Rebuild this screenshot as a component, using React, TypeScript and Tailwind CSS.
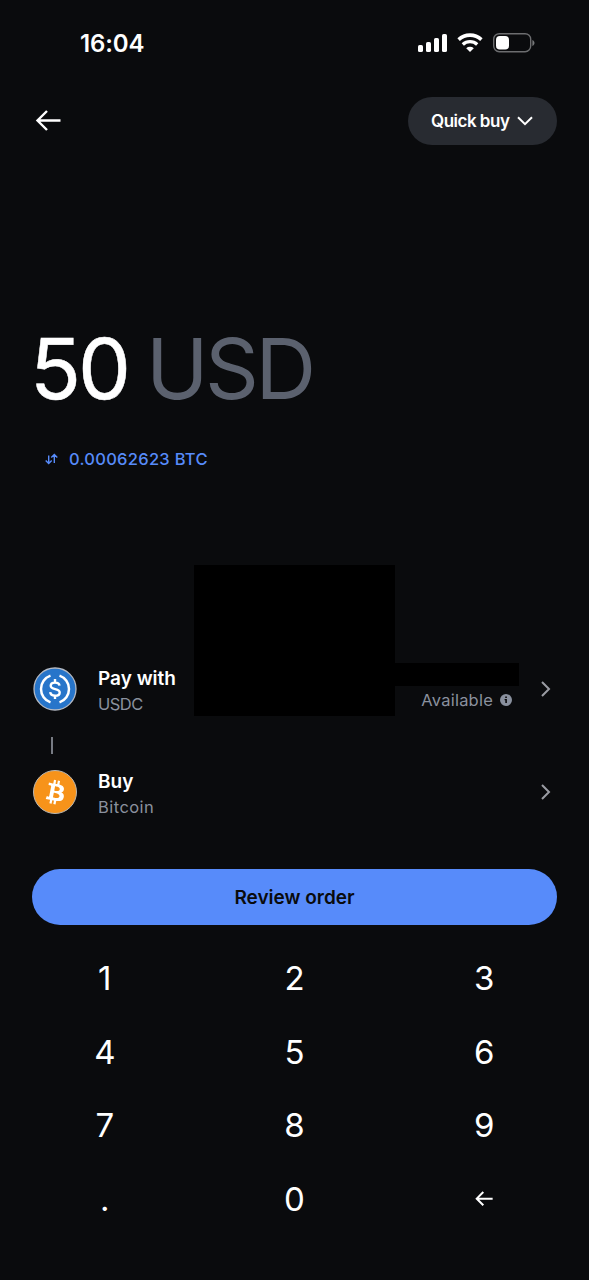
import type { ReactNode } from "react";
import { SiBitcoin } from "react-icons/si";

function StatusBar() {
  return (
    <div className="flex h-[87px] items-center justify-between pl-[80px] pr-[54px]">
      <span className="text-[24px] font-semibold leading-none tracking-[-0.1px]">16:04</span>
      <svg className="mb-[3px]" width="118" height="22" viewBox="0 0 118 22" fill="none">
        <rect x="1" y="14" width="5" height="7" rx="1.6" fill="#fff" />
        <rect x="9" y="11" width="5" height="10" rx="1.6" fill="#fff" />
        <rect x="17" y="7" width="5" height="14" rx="1.6" fill="#fff" />
        <rect x="25" y="3" width="5" height="18" rx="1.6" fill="#fff" />
        <path d="M41.6 8.600a16.800 16.800 0 0 1 22.800 0" stroke="#fff" strokeWidth="3.6" />
        <path d="M45.800 13.400a10.800 10.800 0 0 1 14.400 0" stroke="#fff" strokeWidth="3.4" />
        <path d="M49.2 17.2a5.6 5.6 0 0 1 7.6 0L53 21Z" fill="#fff" />
        <rect x="76.7" y="2.7" width="37" height="18" rx="5.6" stroke="#6c6d6f" strokeWidth="1.4" />
        <rect x="79" y="5" width="13" height="13.5" rx="3.8" fill="#fff" />
        <path d="M115.4 9v6c1.2-.5 2.1-1.600 2.100-3s-.9-2.500-2.100-3Z" fill="#77787a" />
      </svg>
    </div>
  );
}

function ArrowLeft({ size, stroke }: { size: number; stroke: number }) {
  return (
    <svg width={size} height={size} viewBox="0 0 26 26" fill="none" stroke="#fff" strokeWidth={stroke}>
      <path d="M25.500 12.500H2.500M12 3 2.500 12.500l9.500 9.500" strokeLinejoin="miter" />
    </svg>
  );
}

function ChevronRight() {
  return (
    <svg width="10" height="16" viewBox="0 0 10 16" fill="none" stroke="#9a9ca3" strokeWidth="2">
      <path d="M1 1l7 7-7 7" />
    </svg>
  );
}

function UsdcIcon() {
  return (
    <svg width="44" height="44" viewBox="0 0 44 44" fill="none">
      <circle cx="22" cy="22" r="21" fill="#2775ca" stroke="#b4bac4" strokeWidth="1.300" />
      <path d="M17.500 8.600a14.200 14.200 0 0 0 0 26.800M26.500 8.600a14.200 14.200 0 0 1 0 26.800" stroke="#fff" strokeWidth="2.500" />
      <path
        d="M26.500 18.700c-.2-2-1.800-3.100-4.500-3.100-2.600 0-4.300 1.200-4.300 3.200 0 4.700 9 1.900 9 6.600 0 2.100-1.800 3.300-4.600 3.300-2.900 0-4.700-1.200-4.900-3.500M22 12v3.500M22 28.500v3.500"
        stroke="#fff"
        strokeWidth="2.400"
      />
    </svg>
  );
}

function BitcoinIcon() {
  return (
    <div className="flex size-11 items-center justify-center rounded-full border border-[#b9b7b2] bg-[#f7931a]">
      <div className="flex size-[30px] items-center justify-center rounded-full bg-white">
        <SiBitcoin className="size-[39px] shrink-0 rotate-[-3deg] text-[#f7931a]" />
      </div>
    </div>
  );
}

function AssetRow({ icon, title, name, children }: { icon: ReactNode; title: ReactNode; name: ReactNode; children?: ReactNode }) {
  return (
    <div className="flex h-[54px] items-center pl-[33px] pr-[38px]">
      {icon}
      <div className="ml-[21px] flex flex-1 flex-col pt-[3px]">
        {title}
        {name}
      </div>
      {children}
      <ChevronRight />
    </div>
  );
}

const keys = ["1", "2", "3", "4", "5", "6", "7", "8", "9", ".", "0"];

export default function App() {
  return (
    <main className="relative flex h-[1280px] w-[589px] flex-col overflow-hidden bg-[#0a0b0d] font-['Inter',sans-serif] text-white">
      <StatusBar />
      <header className="mt-[10px] flex h-[48px] items-center justify-between pl-[35px] pr-[32px]">
        <ArrowLeft size={26} stroke={2.4} />
        <button className="flex h-[48px] w-[149px] items-center rounded-full bg-[#282b31] pl-[23px]">
          <span className="w-[86px] whitespace-nowrap pt-[2px] text-left text-[17px] font-semibold tracking-[-0.5px]">Quick buy</span>
          <svg width="16" height="10" viewBox="0 0 16 10" fill="none" stroke="#fff" strokeWidth="2">
            <path d="M1 1.200l7 7 7-7" />
          </svg>
        </button>
      </header>

      <section className="mt-[173px] flex h-[102px] items-center pl-[30px] text-[84px] leading-none">
        <span className="w-[116px] tracking-[-3px] [-webkit-text-stroke:0.5px_#fff]">50</span>
        <span className="tracking-[-3.4px] text-[#5b616e]">USD</span>
      </section>
      <div className="mt-[27px] flex h-[24px] items-center pl-[45px] text-[#578bfa]">
        <svg width="13" height="12" viewBox="0 0 13 12" fill="none" stroke="currentColor" strokeWidth="1.400">
          <path d="M3.700 2.500v8M.7 7.500l3 3 3-3M9.300 10V1.500M6.300 4.500l3-3 3 3" />
        </svg>
        <span className="ml-[11px] text-[16.5px] font-medium tracking-[0.28px]">0.00062623 BTC</span>
      </div>

      <section className="mt-[191px]">
        <AssetRow
          icon={<UsdcIcon />}
          title={<span className="text-[19px] font-semibold leading-[26px]">Pay with</span>}
          name={<span className="text-[16.5px] leading-[24px] tracking-[-0.5px] text-[#8a919e]">USDC</span>}
        >
          <div className="mr-[29px] mt-[22px] flex items-center gap-[7px]">
            <span className="text-[16.5px] tracking-[0.22px] text-[#8a919e]">Available</span>
            <svg width="12" height="12" viewBox="0 0 12 12">
              <circle cx="6" cy="6" r="6" fill="#8a919e" />
              <path d="M5.200 2.500h1.700v1.500H5.200zM4.600 5h2.300v4H5.300V6.200h-.7z" fill="#0a0b0d" />
            </svg>
          </div>
        </AssetRow>
        <div className="flex h-[49px] items-center pl-[51px] pt-[9px]">
          <div className="h-[17px] w-[2px] bg-[#777b83]" />
        </div>
        <AssetRow
          icon={<BitcoinIcon />}
          title={<span className="text-[19px] font-semibold leading-[26px]">Buy</span>}
          name={<span className="text-[16.5px] leading-[24px] tracking-[0.45px] text-[#8a919e]">Bitcoin</span>}
        />
      </section>

      <button className="mx-[32px] mt-[50px] h-[56px] shrink-0 rounded-full bg-[#578bfa] pt-[2px] text-[19px] font-semibold text-[#0a0b0d]">
        Review order
      </button>

      <section className="mx-[10px] mt-[16px] grid auto-rows-[73.6px] grid-cols-3 text-[33px]">
        {keys.map((key) => (
          <button key={key} className="flex items-center justify-center pt-[2px]">{key}</button>
        ))}
        <button className="flex items-center justify-center">
          <ArrowLeft size={18} stroke={2.9} />
        </button>
      </section>

      <div className="absolute left-[194px] top-[565px] h-[151px] w-[201px] bg-black" />
      <div className="absolute left-[395px] top-[663px] h-[23px] w-[124px] bg-black" />
    </main>
  );
}
